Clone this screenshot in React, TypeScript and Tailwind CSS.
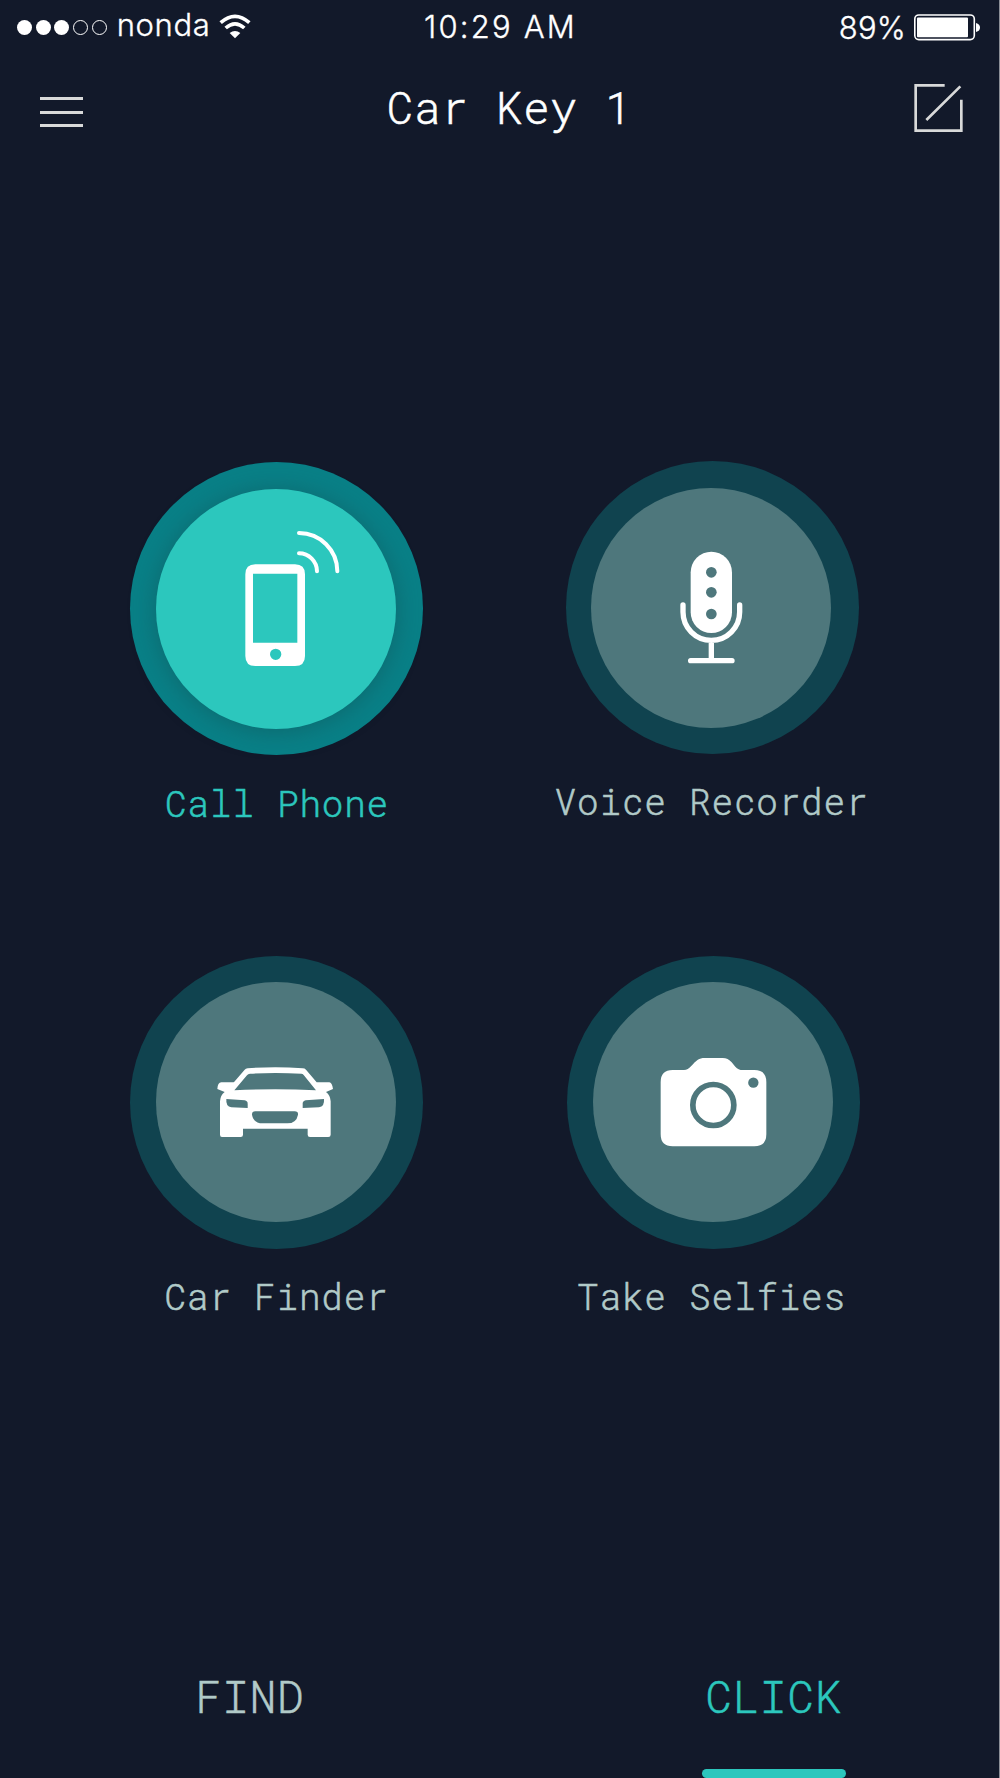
import type { ReactNode } from "react";

const MONO = "font-['Roboto_Mono','DejaVu_Sans_Mono',monospace] font-light [-webkit-text-stroke:0.55px_currentColor]";

function PhoneIcon() {
  return (
    <svg viewBox="108 117 720 720" className="h-60 w-60">
      <path
        fill="#fff"
        fillRule="evenodd"
        d="M406 343H525Q555 343 555 373V618Q555 648 525 648H406Q376 648 376 618V373Q376 343 406 343ZM399 371V578H532V371ZM467 596A17 17 0 1 0 467 630A17 17 0 1 0 467 596Z"
      />
      <path
        d="M537 310A54 54 0 0 1 591 364M537 249A115 115 0 0 1 652 364"
        fill="none"
        stroke="#fff"
        strokeWidth="12"
        strokeLinecap="round"
      />
    </svg>
  );
}

function MicIcon() {
  return (
    <svg viewBox="153 114 720 720" className="h-60 w-60">
      <rect x="452" y="305" width="124" height="244" rx="62" fill="#fff" />
      <g fill="#4e777c">
        <circle cx="514" cy="367" r="16" />
        <circle cx="514" cy="427" r="16" />
        <circle cx="514" cy="492" r="16" />
      </g>
      <path
        d="M429 465V486A85 85 0 0 0 599 486V465M514 572V632M452 632H576"
        fill="none"
        stroke="#fff"
        strokeWidth="16"
        strokeLinecap="round"
      />
    </svg>
  );
}

function CarIcon() {
  return (
    <svg viewBox="-132 -204 720 720" className="h-60 w-60">
      <path
        fill="#fff"
        d="M66 261Q60 261 60 254V154Q61 136 74 126L52 117Q53 98 64 97H98Q101 97 103 95L134 59Q137 56 143 55Q226 48 308 55Q314 55 318 59L350 97H388Q396 97 399 117L378 126Q391 136 392 154V254Q392 261 385 261H330Q323 261 323 254V236H129V254Q129 261 122 261Z"
      />
      <g fill="#4e777c">
        <path d="M103 121L141 76Q144 72 150 71Q226 67 304 71Q308 71 311 75L348 121Q226 114 103 121Z" />
        <path d="M79 147L134 151Q143 153 143 161V174L94 172Q77 170 79 147Z" />
        <path d="M372 147L317 151Q308 153 308 161V174L357 172Q374 170 372 147Z" />
        <path d="M166 184H284Q295 184 294 194Q289 220 262 220H188Q160 219 156 194Q156 184 166 184Z" />
      </g>
    </svg>
  );
}

function CameraIcon() {
  return (
    <svg viewBox="131 126 720 720" className="h-60 w-60">
      <path
        fill="#fff"
        d="M370 390H404Q416 390 425 379C442 360 449 354 466 354H520Q536 354 547 367L558 380Q567 390 580 390H615Q651 390 651 426V583Q651 619 615 619H370Q334 619 334 583V426Q334 390 370 390Z"
      />
      <circle cx="492" cy="495" r="61.5" fill="none" stroke="#4e777c" strokeWidth="17" />
      <circle cx="612" cy="428" r="15.5" fill="#4e777c" />
    </svg>
  );
}

function Action({
  label,
  active = false,
  className,
  discClass,
  labelClass,
  children,
}: {
  label: string;
  active?: boolean;
  className: string;
  discClass: string;
  labelClass: string;
  children: ReactNode;
}) {
  return (
    <button className={`flex w-[293px] flex-col items-center ${className}`}>
      <span
        className={`flex h-[293px] w-[293px] shrink-0 rounded-full ${discClass} ${
          active ? "bg-[#098087]" : "bg-[#10434f]"
        }`}
      >
        <span
          className={`block h-60 w-60 rounded-full ${
            active ? "bg-[#2cc7bd] shadow-[0_2px_24px_rgba(18,80,84,0.5)]" : "bg-[#4e777c]"
          }`}
        >
          {children}
        </span>
      </span>
      <span
        className={`text-[36px] leading-[40px] tracking-[0.8px] whitespace-nowrap ${MONO} ${labelClass} ${
          active ? "text-[#2cc7bd]" : "text-[#b1cac8]"
        }`}
      >
        {label}
      </span>
    </button>
  );
}

function StatusBar() {
  return (
    <div className="grid h-[54px] grid-cols-[1fr_auto_1fr] items-start pl-[17px] pr-[19px] font-['Inter',sans-serif] text-[31px] leading-[38px] font-light text-white [-webkit-text-stroke:0.35px_currentColor]">
      <div className="flex">
        <div className="flex gap-[3.7px] pt-[20px]">
          <i className="h-[15px] w-[15px] rounded-full bg-white" />
          <i className="h-[15px] w-[15px] rounded-full bg-white" />
          <i className="h-[15px] w-[15px] rounded-full bg-white" />
          <i className="h-[15px] w-[15px] rounded-full border border-white" />
          <i className="h-[15px] w-[15px] rounded-full border border-white" />
        </div>
        <span className="pl-[10px] pt-[6px] tracking-[0.6px]">nonda</span>
        <svg viewBox="0 0 96 78" className="ml-[9px] mt-[13px] h-[26px] w-8">
          <g fill="none" stroke="#fff" strokeWidth="11">
            <path d="M5 29Q48 -9 91 29" />
            <path d="M20 45Q48 20 76 45" />
          </g>
          <path d="M32 60Q48 48 64 60L48 76Z" fill="#fff" />
        </svg>
      </div>
      <span className="pl-[4px] pt-[8px] tracking-[2.2px]">10:29 AM</span>
      <div className="flex justify-end">
        <span className="pt-[9px] tracking-[0.2px]">89%</span>
        <svg viewBox="0 0 67 28" className="ml-[7px] mt-[13px] h-7 w-[67px]">
          <rect x="1.8" y="2" width="59.5" height="24.6" rx="4" fill="none" stroke="#fff" strokeWidth="1.6" />
          <rect x="4" y="4.5" width="51" height="19.7" rx="1" fill="#fff" />
          <path d="M63 10Q67 11 67 14.5Q67 18 63 19Z" fill="#fff" />
        </svg>
      </div>
    </div>
  );
}

export default function App() {
  return (
    <div className="flex h-[1778px] w-[1000px] flex-col overflow-hidden border-r border-[#8b8f97] bg-[#12192a]">
      <StatusBar />
      <header className="grid h-[106px] grid-cols-[1fr_auto_1fr] items-start pl-10 pr-[35px]">
        <button className="flex w-[43px] flex-col gap-[10.3px] pt-[43.3px]">
          <i className="h-[3px] w-full bg-[#d8d9d9]" />
          <i className="h-[3px] w-full bg-[#d8d9d9]" />
          <i className="h-[3px] w-full bg-[#d8d9d9]" />
        </button>
        <h1
          className={`pl-[15px] pt-[28px] text-[44px] leading-[50px] tracking-[0.9px] text-white ${MONO}`}
        >
          Car Key 1
        </h1>
        <button className="mt-[29px] justify-self-end">
          <svg viewBox="342 249 150 150" className="h-[50px] w-[50px]">
            <path
              d="M434 256H347V392H484V299M379 360L481 259"
              fill="none"
              stroke="#d8d9d9"
              strokeWidth="8"
            />
          </svg>
        </button>
      </header>

      <main className="grid h-[1260px] grid-cols-[436px_293px] grid-rows-[494px_auto] pl-[130px] pt-[301px]">
        <Action label="Call Phone" active className="mt-px" discClass="pl-[26px] pt-[27px]" labelClass="mt-[28px] ml-px">
          <PhoneIcon />
        </Action>
        <Action label="Voice Recorder" className="" discClass="pl-[25px] pt-[27px]" labelClass="mt-[27px] -ml-[2px]">
          <MicIcon />
        </Action>
        <Action label="Car Finder" className="mt-px" discClass="pl-[26px] pt-[26px]" labelClass="mt-[27px]">
          <CarIcon />
        </Action>
        <Action label="Take Selfies" className="ml-px mt-px" discClass="pl-[26px] pt-[26px]" labelClass="mt-[27px] -ml-[4px]">
          <CameraIcon />
        </Action>
      </main>

      <nav className={`grid flex-1 grid-cols-2 text-[44px] leading-[50px] tracking-[0.9px] ${MONO}`}>
        <button className="flex flex-col items-center pt-[252px] text-[#b1cac8]">FIND</button>
        <button className="flex flex-col items-center pt-[252px] pl-[50px] text-[#2cc7bd]">
          <span className="-ml-px">CLICK</span>
          <i className="mt-[48px] h-[9px] w-36 shrink-0 rounded-full bg-[#2cc7bd]" />
        </button>
      </nav>
    </div>
  );
}
